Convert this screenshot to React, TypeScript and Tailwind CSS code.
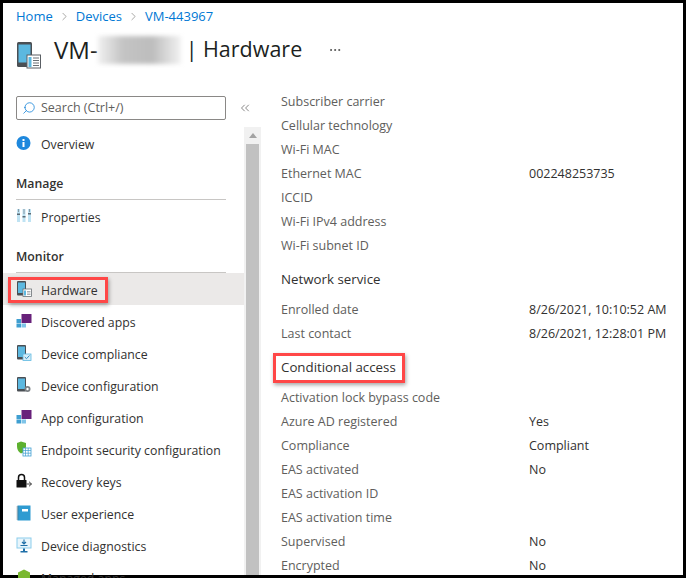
import type { ReactNode } from "react";
import { ChevronRight, ChevronsLeft, Search, MoreHorizontal } from "lucide-react";

const PhoneIcon = ({ badge }: { badge: ReactNode }) => (
  <svg width="16" height="16" viewBox="0 0 16 16">
    <rect x="1" y="0" width="9" height="14.5" rx="1" fill="#4a4f54" />
    <rect x="2" y="1.5" width="7" height="10.5" fill="#5cb8e0" />
    {badge}
  </svg>
);

const ListBadge = () => (
  <g>
    <rect x="7" y="8" width="8.5" height="7.5" fill="#fff" stroke="#6b7075" strokeWidth="0.8" />
    <rect x="8" y="9.5" width="2" height="5" fill="#5cb8e0" />
    <path d="M11 10.5h3.5M11 12h3.5M11 13.5h3.5" stroke="#8a8f94" strokeWidth="0.7" />
  </g>
);

const CheckBadge = () => (
  <g>
    <rect x="7" y="9" width="8" height="6.5" fill="#d5ecf7" stroke="#5cb8e0" strokeWidth="0.8" />
    <path d="M8.8 12l1.7 1.7 3-3.2" fill="none" stroke="#2f8fc4" strokeWidth="1" />
  </g>
);

const GearBadge = () => (
  <g>
    <circle cx="11.5" cy="12" r="3" fill="#7a7f84" />
    <circle cx="11.5" cy="12" r="1.2" fill="#fff" />
  </g>
);

const AppsIcon = () => (
  <svg width="16" height="16" viewBox="0 0 16 16">
    <rect x="5.5" y="1" width="10" height="9" fill="#68217a" />
    <rect x="0.5" y="6" width="4.5" height="4" fill="#3f9fd1" />
    <rect x="0.5" y="10.5" width="4.5" height="4" fill="#3f9fd1" />
    <rect x="5.5" y="10.5" width="4.5" height="4" fill="#7fc4e8" />
  </svg>
);

const InfoIcon = () => (
  <svg width="16" height="16" viewBox="0 0 16 16">
    <circle cx="7.500" cy="8" r="7" fill="#1e88dd" />
    <rect x="6.500" y="7" width="2" height="5" fill="#fff" />
    <rect x="6.500" y="4" width="2" height="2" fill="#fff" />
  </svg>
);

const SlidersIcon = () => (
  <svg width="16" height="16" viewBox="0 0 16 16">
    <path d="M1 1h3v13H1zM6.500 1h3v13h-3zM12 1h3v13h-3z" fill="#bfe3f3" />
    <path d="M1 5.500h3v1.500H1zM6.500 8h3v1.500h-3zM12 5h3v1.500h-3z" fill="#5a6a75" />
    <path d="M2 1h1v3H2zM7.500 1h1v5h-1zM13 1h1v3h-1z" fill="#8a9aa5" />
  </svg>
);

const ShieldIcon = () => (
  <svg width="16" height="16" viewBox="0 0 16 16">
    <path d="M5 0.500l5 1.500v4l-2 5-3 1.500C2 11 1 8 1 5V2z" fill="#5db12f" />
    <rect x="7" y="7" width="8" height="8" fill="#fff" stroke="#3f9fd1" strokeWidth="0.8" />
    <path d="M7 9.500h8M9.500 7v8M12.200 7v8M7 12.200h8" stroke="#3f9fd1" strokeWidth="0.7" />
  </svg>
);

const LockIcon = () => (
  <svg width="16" height="16" viewBox="0 0 16 16">
    <path d="M2.500 7V4.500a3 3 0 0 1 6 0V7" fill="none" stroke="#111" strokeWidth="1.500" />
    <rect x="0.500" y="7" width="10" height="7.500" rx="0.500" fill="#111" />
    <path d="M10.500 11h5M13 8.700l2.500 2.300-2.500 2.300" fill="none" stroke="#333" strokeWidth="0.900" />
  </svg>
);

const BookIcon = () => (
  <svg width="16" height="16" viewBox="0 0 16 16">
    <rect x="1.500" y="0.500" width="13" height="15" fill="#2f9bd1" />
    <rect x="6" y="4" width="6" height="2.500" fill="#fff" />
    <path d="M0.500 2h2M0.500 4h2M0.500 6h2M0.500 8h2M0.500 10h2M0.500 12h2M0.500 14h2" stroke="#555" strokeWidth="0.600" />
  </svg>
);

const MonitorIcon = () => (
  <svg width="16" height="16" viewBox="0 0 16 16">
    <rect x="0.500" y="0.500" width="15" height="11" fill="#8ccdec" />
    <rect x="1.500" y="1.500" width="13" height="9" fill="#e8f5fb" />
    <path d="M8 2.500v4M6 5l2 2 2-2M4.500 8.500h7" fill="none" stroke="#1f6fa8" strokeWidth="1.100" />
    <rect x="7" y="11.500" width="2" height="2.500" fill="#1f6fa8" />
    <rect x="4.500" y="14" width="7" height="1.500" fill="#1f6fa8" />
  </svg>
);

const GreenIcon = () => (
  <svg width="16" height="16" viewBox="0 0 16 16">
    <path d="M8 0.500l6 3v7l-6 3-6-3v-7z" fill="#7ab82f" />
  </svg>
);

const NavRow = ({
  icon,
  label,
  active,
  boxed,
}: {
  icon: ReactNode;
  label: string;
  active?: boolean;
  boxed?: boolean;
}) => (
  <div className={`relative flex h-8 items-center gap-[9px] pl-[13px] ${active ? "bg-[#ebe9e8]" : ""}`}>
    <span className="flex w-4 shrink-0 items-center justify-center">{icon}</span>
    <span className="pt-[3px] text-[12.3px] leading-[18px] text-[#323130]">{label}</span>
    {boxed && (
      <span className="absolute top-1 left-[5px] h-[26px] w-[100px] border-[3px] border-[#ff4747] shadow-[1px_2px_4px_rgba(0,0,0,0.35)]" />
    )}
  </div>
);

const NavHeading = ({ label }: { label: string }) => (
  <div className="mx-[13px] flex h-[41px] w-[210px] items-center border-b border-[#c8c6c4] pt-[11px] text-[12.3px] font-semibold text-[#323130]">
    {label}
  </div>
);

const Field = ({ label, value }: { label: string; value?: string }) => (
  <div className="flex h-6 items-center text-[12.5px]">
    <span className="w-[248px] shrink-0 text-[#605e5c]">{label}</span>
    <span className="whitespace-nowrap text-[#323130]">{value}</span>
  </div>
);

export default function App() {
  return (
    <div className="h-[578px] w-[686px] overflow-hidden bg-white font-['Open_Sans',sans-serif]">
      <div className="flex h-full flex-col border-[3px] border-black">
        <nav className="flex h-[27px] items-center gap-[5px] pl-[13px] text-[13px] text-[#0078d4]">
          <span>Home</span>
          <ChevronRight size={13} strokeWidth={1} className="text-[#605e5c]" />
          <span>Devices</span>
          <ChevronRight size={13} strokeWidth={1} className="text-[#605e5c]" />
          <span>VM-443967</span>
        </nav>

        <header className="flex h-[47px] items-center pl-[14px]">
          <svg width="24" height="30" viewBox="0 0 24 30" className="mt-1 shrink-0">
            <rect x="0" y="1" width="15" height="25" rx="1.500" fill="#4a4f54" />
            <rect x="1.500" y="3.500" width="12" height="18" fill="#5cb8e0" />
            <rect x="10" y="14" width="13.500" height="13" fill="#fff" stroke="#5a5f64" strokeWidth="1" />
            <rect x="11.500" y="16" width="3" height="10" fill="#5cb8e0" />
            <path d="M16 17h6M16 19.500h6M16 22h6M16 24.500h6" stroke="#6a6f74" strokeWidth="1" />
          </svg>
          <h1 className="mb-2 ml-[13px] flex items-center text-[21.500px] font-normal whitespace-nowrap text-[#201f1e]">
            <span className="text-[24px] font-medium">VM-</span>
            <span className="h-[28px] w-[83px] bg-[linear-gradient(90deg,#f0f0f0,#c4c4c4_30%,#bdbdbd_65%,#f2f2f2)] blur-[2px]" />
            <span className="ml-[5px]">| Hardware</span>
          </h1>
          <MoreHorizontal size={14} strokeWidth={1.250} className="mb-2 ml-[26px] text-[#323130]" />
        </header>

        <div className="flex min-h-0 flex-1">
          <aside className="flex w-[258px] shrink-0">
            <div className="w-[241px] shrink-0 pt-[19px]">
              <div className="flex items-center">
                <div className="ml-[13px] flex h-6 w-[210px] shrink-0 items-center gap-[5px] rounded-[2px] border border-[#8a8886] pl-[5px] text-[12.5px] text-[#605e5c]">
                  <Search size={14} strokeWidth={1.250} className="-scale-x-100 text-[#0078d4]" />
                  Search (Ctrl+/)
                </div>
                <ChevronsLeft size={14} strokeWidth={1} className="ml-[12px] shrink-0 text-[#323130]" />
              </div>
              <div className="mt-[7px]">
                <NavRow icon={<InfoIcon />} label="Overview" />
                <NavHeading label="Manage" />
                <NavRow icon={<SlidersIcon />} label="Properties" />
                <NavHeading label="Monitor" />
                <NavRow active boxed icon={<PhoneIcon badge={<ListBadge />} />} label="Hardware" />
                <NavRow icon={<AppsIcon />} label="Discovered apps" />
                <NavRow icon={<PhoneIcon badge={<CheckBadge />} />} label="Device compliance" />
                <NavRow icon={<PhoneIcon badge={<GearBadge />} />} label="Device configuration" />
                <NavRow icon={<AppsIcon />} label="App configuration" />
                <NavRow icon={<ShieldIcon />} label="Endpoint security configuration" />
                <NavRow icon={<LockIcon />} label="Recovery keys" />
                <NavRow icon={<BookIcon />} label="User experience" />
                <NavRow icon={<MonitorIcon />} label="Device diagnostics" />
                <NavRow icon={<GreenIcon />} label="Managed apps" />
              </div>
            </div>
            <div className="mt-[50px] flex w-[17px] shrink-0 flex-col bg-[#f1f1f1] px-[2px]">
              <div className="flex h-[17px] items-center justify-center">
                <span className="border-x-[4px] border-b-[5px] border-x-transparent border-b-[#a3a3a3]" />
              </div>
              <div className="flex-1 bg-[#c1c1c1]" />
            </div>
          </aside>

          <main className="min-w-0 flex-1 overflow-hidden pt-[13px] pl-[20px]">
            <Field label="Subscriber carrier" />
            <Field label="Cellular technology" />
            <Field label="Wi-Fi MAC" />
            <Field label="Ethernet MAC" value="002248253735" />
            <Field label="ICCID" />
            <Field label="Wi-Fi IPv4 address" />
            <Field label="Wi-Fi subnet ID" />
            <div className="flex h-10 items-center pt-[4px] text-[13.300px] text-[#323130]">Network service</div>
            <Field label="Enrolled date" value="8/26/2021, 10:10:52 AM" />
            <Field label="Last contact" value="8/26/2021, 12:28:01 PM" />
            <div className="relative flex h-10 items-center pt-[4px] text-[13.300px] text-[#323130]">
              Conditional access
              <span className="absolute top-[7px] -left-[8px] h-[30px] w-[132px] border-[3px] border-[#ff4747] shadow-[1px_2px_4px_rgba(0,0,0,0.35)]" />
            </div>
            <Field label="Activation lock bypass code" />
            <Field label="Azure AD registered" value="Yes" />
            <Field label="Compliance" value="Compliant" />
            <Field label="EAS activated" value="No" />
            <Field label="EAS activation ID" />
            <Field label="EAS activation time" />
            <Field label="Supervised" value="No" />
            <Field label="Encrypted" value="No" />
          </main>
        </div>
      </div>
    </div>
  );
}
